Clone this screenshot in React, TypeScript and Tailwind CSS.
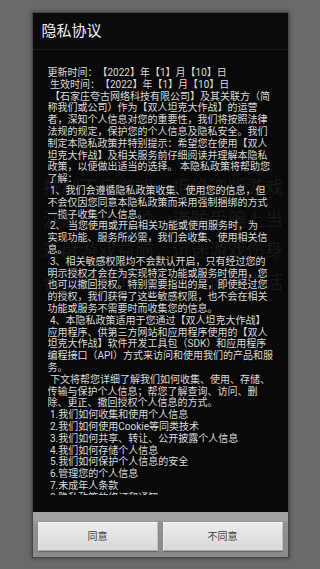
const bodyLines = [
  "更新时间：【2022】年【1】月【10】日",
  " 生效时间：【2022】年【1】月【10】日",
  " 【石家庄夸古网络科技有限公司】及其关联方（简",
  "称我们或公司）作为【双人坦克大作战】的运营",
  "者，深知个人信息对您的重要性，我们将按照法律",
  "法规的规定，保护您的个人信息及隐私安全。我们",
  "制定本隐私政策并特别提示：希望您在使用【双人",
  "坦克大作战】及相关服务前仔细阅读并理解本隐私",
  "政策，以便做出适当的选择。 本隐私政策将帮助您",
  "了解：",
  " 1、我们会遵循隐私政策收集、使用您的信息，但",
  "不会仅因您同意本隐私政策而采用强制捆绑的方式",
  "一揽子收集个人信息。",
  " 2、 当您使用或开启相关功能或使用服务时，为",
  "实现功能、服务所必需，我们会收集、使用相关信",
  "息。",
  " 3、相关敏感权限均不会默认开启，只有经过您的",
  "明示授权才会在为实现特定功能或服务时使用，您",
  "也可以撤回授权。特别需要指出的是，即使经过您",
  "的授权，我们获得了这些敏感权限，也不会在相关",
  "功能或服务不需要时而收集您的信息。",
  " 4、本隐私政策适用于您通过【双人坦克大作战】",
  "应用程序、供第三方网站和应用程序使用的【双人",
  "坦克大作战】软件开发工具包（SDK）和应用程序",
  "编程接口（API）方式来访问和使用我们的产品和服",
  "务。",
  " 下文将帮您详细了解我们如何收集、使用、存储、",
  "传输与保护个人信息；帮您了解查询、访问、删",
  "除、更正、撤回授权个人信息的方式。",
  " 1.我们如何收集和使用个人信息",
  " 2.我们如何使用Cookie等同类技术",
  " 3.我们如何共享、转让、公开披露个人信息",
  " 4.我们如何存储个人信息",
  " 5.我们如何保护个人信息的安全",
  " 6.管理您的个人信息",
  " 7.未成年人条款",
  " 8.隐私政策的修订和通知",
];

const advice = [
  "抵制不良游戏，拒绝盗版游戏",
  "注意自我保护，谨防受骗上当",
  "适度游戏益脑，沉迷游戏伤身",
  "合理安排时间，享受健康生活",
];

const font = "font-['Roboto','Noto_Sans_CJK_SC',sans-serif] [text-spacing-trim:space-all]";

function DialogButton({ label }: { label: string }) {
  return (
    <button
      type="button"
      className="flex h-[29px] flex-1 items-center justify-center border border-t-[#f4f4f4] border-r-[#c4c4c4] border-b-[#a8a8a8] border-l-[#ececec] bg-gradient-to-b from-[#ececec] to-[#d9d9d9] text-[10px] text-[#3c3c3c] shadow-[0_1px_1px_rgba(0,0,0,0.25)]"
    >
      {label}
    </button>
  );
}

export default function App() {
  return (
    <div className={`min-h-[569px] w-[320px] bg-[#6a6a6a] pt-[13px] ${font}`}>
      <div className="mx-auto flex w-[255px] flex-col shadow-[0_0_0_1px_#464646,0_0_4px_2px_rgba(0,0,0,0.3)]">
        <div className="flex h-[36px] items-center bg-[#0b0b0b] pl-[9px] text-[15px] text-[#f0f0f0]">
          隐私协议
        </div>
        <div className="h-px bg-[#1d1d1d]" />

        <div className="relative h-[462px] bg-[#090909] px-[15px] py-[17px]">
          <div className="h-[428px] overflow-hidden text-[10px] leading-[11.8px] text-[#dadada]">
            {bodyLines.map((line, i) => (
              <div key={i} className="whitespace-pre">
                {line}
              </div>
            ))}
          </div>

          {/* faint advice text showing through the dialog */}
          <div className="pointer-events-none absolute inset-x-0 top-[123px] pl-[6px] text-center text-[18.5px] leading-[31.5px] text-[#ffffff]/[0.08]">
            {advice.map((line) => (
              <div key={line} className="whitespace-nowrap">
                {line}
              </div>
            ))}
          </div>
        </div>

        <div className="flex h-[45px] gap-[5px] bg-[linear-gradient(#a2a2a2_0,#a2a2a2_8px,#939393_10px,#8a8a8a_100%)] px-[5px] pt-[10px] pb-[6px]">
          <DialogButton label="同意" />
          <DialogButton label="不同意" />
        </div>
      </div>
    </div>
  );
}
